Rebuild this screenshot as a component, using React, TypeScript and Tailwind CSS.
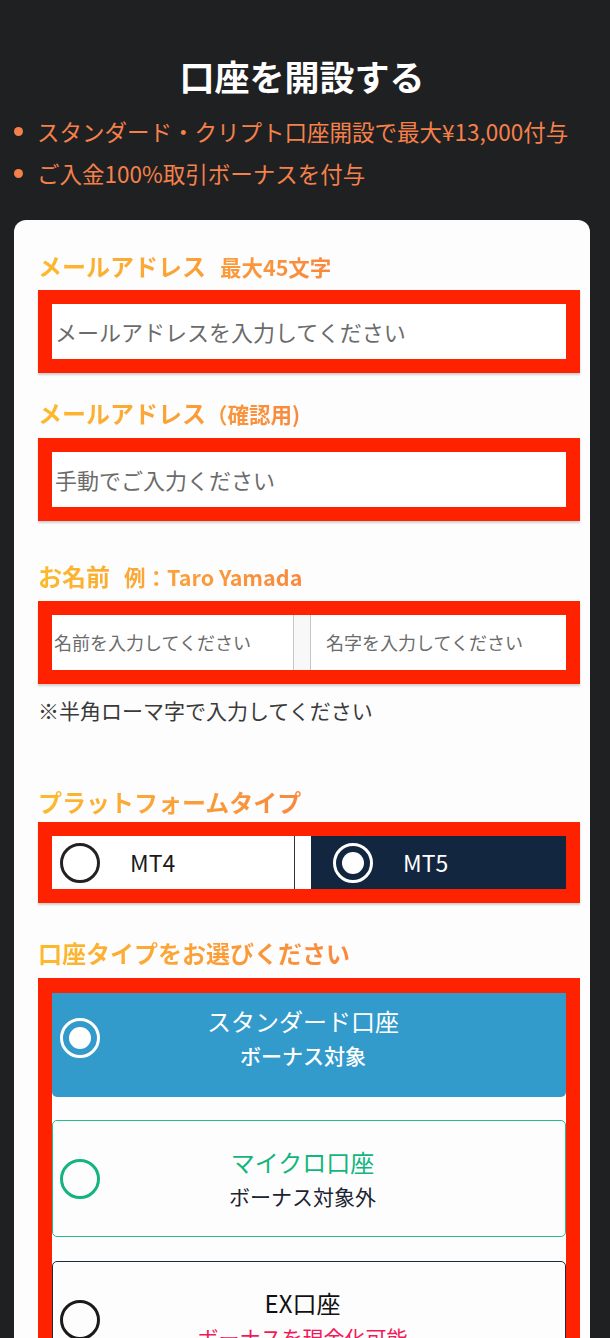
import React, { FC, ReactNode } from 'react'

const font = { fontFamily: '"Noto Sans CJK JP", "Noto Sans", sans-serif' }

const Label: FC<{ children: ReactNode, className?: string }> = ({ children, className = '' }) => (
    <div className={`h-[30px] leading-[30px] ${className}`}>
        <span className="inline-block bg-gradient-to-r from-[#fcba2c] to-[#f8883f] bg-clip-text text-transparent font-bold text-[24px]">
            {children}
        </span>
    </div>
)

const Radio: FC<{ checked?: boolean, color: string, dot?: string }> = ({ checked, color, dot }) => (
    <div className={`w-[40px] h-[40px] shrink-0 rounded-full border-[3px] ${color} flex items-center justify-center`}>
        {checked && <div className={`w-[22px] h-[22px] rounded-full ${dot}`} />}
    </div>
)

const RedBox: FC<{ children: ReactNode, className?: string }> = ({ children, className = '' }) => (
    <div className={`box-border border-[14px] border-[#ff2200] shadow-[0_2px_2px_rgba(0,0,0,0.18)] ${className}`}>
        {children}
    </div>
)

const App: FC = () => {
    return (
        <div className="min-h-screen bg-[#1f2022] pt-[51px] overflow-hidden" style={font}>
            <h1 className="text-center text-white font-bold text-[35px] leading-[50px] pr-[6px]">口座を開設する</h1>
            <ul className="mt-[9px] mb-[26px] text-[#f6804a] text-[22.5px] leading-[42px]">
                <li className="flex items-center">
                    <span className="w-[9px] h-[9px] rounded-full bg-[#f6804a] ml-[14px] mr-[14px]" />
                    スタンダード・クリプト口座開設で最大¥13,000付与
                </li>
                <li className="flex items-center">
                    <span className="w-[9px] h-[9px] rounded-full bg-[#f6804a] ml-[14px] mr-[14px]" />
                    ご入金100%取引ボーナスを付与
                </li>
            </ul>

            <div className="ml-[14px] w-[576px] bg-[#fdfdfd] rounded-t-[12px] pt-[31px] pl-[24px] pr-[10px] pb-[40px]">
                <Label>
                    メールアドレス<span className="text-[21.5px] ml-[14px]">最大45文字</span>
                </Label>
                <RedBox className="mt-[9px] h-[83px]">
                    <div className="h-full bg-white flex items-center pl-[3px] text-[22px] text-[#6b6b6b]">
                        メールアドレスを入力してください
                    </div>
                </RedBox>

                <Label className="mt-[25px]">
                    メールアドレス<span className="text-[21.5px]">（確認用)</span>
                </Label>
                <RedBox className="mt-[10px] h-[83px]">
                    <div className="h-full bg-white flex items-center pl-[3px] text-[22px] text-[#6b6b6b]">
                        手動でご入力ください
                    </div>
                </RedBox>

                <Label className="mt-[40px]">
                    お名前<span className="text-[21.5px] ml-[14px]">例：Taro Yamada</span>
                </Label>
                <RedBox className="mt-[10px] h-[83px]">
                    <div className="h-full flex bg-[#f8f8f8] text-[18px] text-[#6b6b6b]">
                        <div className="w-[242px] bg-white border-r border-[#c8c8c8] flex items-center pl-[2px]">名前を入力してください</div>
                        <div className="w-[16px]" />
                        <div className="flex-1 bg-white border-l border-[#c8c8c8] flex items-center pl-[15px]">名字を入力してください</div>
                    </div>
                </RedBox>
                <p className="mt-[11px] h-[30px] leading-[30px] text-[21px] text-[#3a3a3a]">※半角ローマ字で入力してください</p>

                <Label className="mt-[62px]">プラットフォームタイプ</Label>
                <RedBox className="mt-[5px] h-[81px]">
                    <div className="h-full flex bg-white">
                        <div className="w-[243px] border-r border-[#333] flex items-center pl-[8px] gap-[30px]">
                            <Radio color="border-[#222]" />
                            <span className="text-[23px] text-[#1a1a1a]">MT4</span>
                        </div>
                        <div className="w-[16px]" />
                        <div className="flex-1 bg-[#13263f] flex items-center pl-[22px] gap-[30px]">
                            <Radio checked color="border-white" dot="bg-white" />
                            <span className="text-[23px] text-white">MT5</span>
                        </div>
                    </div>
                </RedBox>

                <Label className="mt-[35px]">口座タイプをお選びください</Label>
                <div className="mt-[10px] border-[#ff2200] border-t-[15px] border-x-[14px] h-[400px]">
                    <div className="h-[104px] bg-[#339acc] rounded-b-[5px] flex items-center pl-[8px] pb-[14px]">
                        <Radio checked color="border-white" dot="bg-white" />
                        <div className="flex-1 text-center text-white pr-[60px]">
                            <div className="text-[24px] leading-[34px]">スタンダード口座</div>
                            <div className="text-[21px] leading-[34px] font-medium">ボーナス対象</div>
                        </div>
                    </div>

                    <div className="mt-[23px] h-[117px] border border-[#1fbf85] rounded-[5px] bg-[#fdfdfd] flex items-center pl-[7px]">
                        <Radio color="border-[#14b57c]" />
                        <div className="flex-1 text-center pr-[60px]">
                            <div className="text-[24px] leading-[34px] text-[#14b57c]">マイクロ口座</div>
                            <div className="text-[21px] leading-[34px] text-[#1c2333]">ボーナス対象外</div>
                        </div>
                    </div>

                    <div className="mt-[24px] h-[117px] border border-[#1f2a3c] rounded-[5px] bg-[#fdfdfd] flex items-center pl-[7px]">
                        <Radio color="border-[#1a1a1a]" />
                        <div className="flex-1 text-center pr-[60px]">
                            <div className="text-[24px] leading-[34px] text-[#111]">EX口座</div>
                            <div className="text-[21px] leading-[34px] text-[#f2185a]">ボーナスを現金化可能</div>
                        </div>
                    </div>
                </div>
            </div>
        </div>
    )
}

export default App
